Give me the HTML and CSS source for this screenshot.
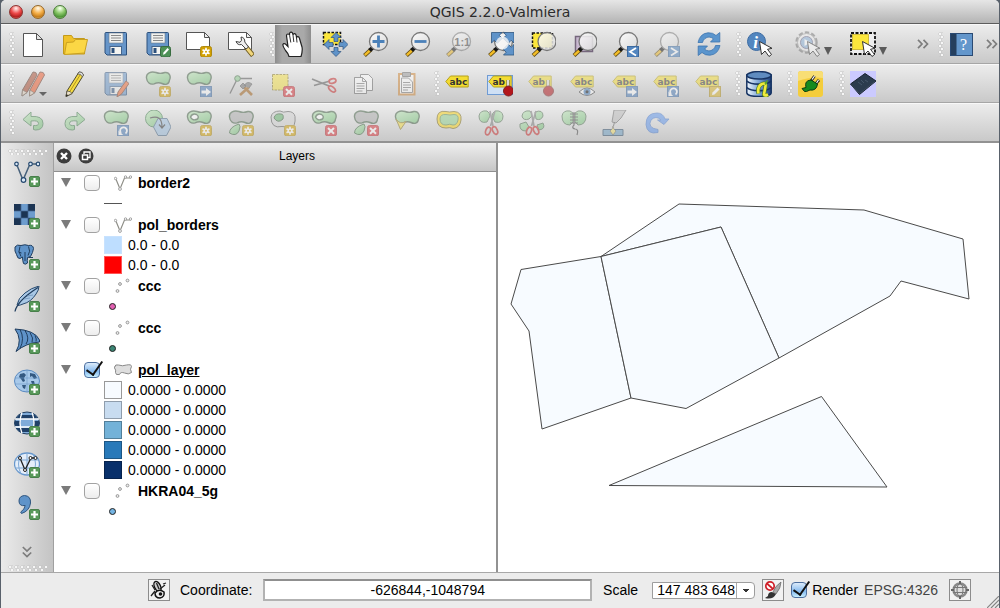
FILE: index.html
```
<!DOCTYPE html>
<html lang="en">
<head>
<meta charset="utf-8">
<title>QGIS 2.2.0-Valmiera</title>
<link rel="stylesheet" href="styles.css">
</head>
<body>
<svg class="sprite" aria-hidden="true">
<defs>
<linearGradient id="dbg" x1="0" y1="0" x2="1" y2="0"><stop offset="0" stop-color="#f2f8fd"/><stop offset=".5" stop-color="#7ba5d6"/><stop offset="1" stop-color="#1d3f78"/></linearGradient>
<linearGradient id="lens" x1="0" y1="0" x2="1" y2="1"><stop offset="0" stop-color="#fff"/><stop offset="1" stop-color="#d9d9d9"/></linearGradient>
<linearGradient id="green" x1="0" y1="0" x2="1" y2="1"><stop offset="0" stop-color="#b9e4b3"/><stop offset="1" stop-color="#6fbf73"/></linearGradient>

<path id="blob" d="M1.500 7C1 2 6 0 11 1.500C15 3.200 17 2.500 20 1.500C25 1 26 6 24.500 9C24 14 20 14 17 12.500C14 11 12 11.500 9 12.800C5 14 2 11.500 1.500 7Z" stroke="#3f5b40" stroke-width="1.400"/>
<g id="b-sun"><rect x="14.500" y="15.500" width="11" height="10.500" rx="2" fill="#d2a000" stroke="#b08a10"/><path d="M20 16.800v8M16.500 18.800l7 4M23.500 18.800l-7 4" stroke="#fff" stroke-width="1.600"/><circle cx="20" cy="20.800" r="2.500" fill="#fff"/><circle cx="20" cy="20.800" r="1" fill="#d2a000"/></g>
<g id="b-x"><rect x="14.500" y="15.500" width="11" height="10.500" rx="2" fill="#d9343b" stroke="#b92a30"/><path d="M17 18l6 5.700M23 18l-6 5.700" stroke="#fff" stroke-width="2"/></g>
<g id="b-plus"><rect x="15.500" y="15.500" width="10" height="10" rx="1.500" fill="#58995a" stroke="#487f4b"/><path d="M20.500 17v7M17 20.500h7" stroke="#fff" stroke-width="2.200"/></g>
<g id="b-arrow"><rect x="14.500" y="15.500" width="11" height="10.500" fill="#4d7db8" stroke="#3c669b"/><path d="M15.500 19.500h4.500v-2.500l5 4-5 4v-2.500h-4.500z" fill="#fff"/></g>
<g id="b-turn"><rect x="14.500" y="15.500" width="11" height="10.500" fill="#4d7db8" stroke="#3c669b"/><path d="M22.500 23.500a3.400 3.400 0 1 0-4.500-.5" fill="none" stroke="#fff" stroke-width="1.800"/><path d="M15.500 20.500v4.500h4.700z" fill="#fff"/></g>
<g id="floppy"><path d="M2 2.500q0-1 1-1h19.500q1 0 1 1v21.500H4l-2-2z" fill="#6695c9" stroke="#2c507c"/><rect x="6" y="2" width="14" height="10" fill="#f1f1ee" stroke="#6d7c8c" stroke-width=".6"/><path d="M8 4.500h10M8 7h10M8 9.500h10" stroke="#888"/><rect x="7" y="15.500" width="11.500" height="8" fill="#f4f4f1" stroke="#46658b"/><rect x="8.500" y="17" width="3" height="5" fill="#2c507c"/></g>
<g id="pencil"><path d="M4 20L16 1q3.500-.5 4.500 3L9 22.500l-6 3z" fill="#f5dc42" stroke="#4c4830"/><path d="M6.500 21L18 2.500" stroke="#b1941d"/><path d="M4 20l-1 5.500 6-3q-1-2.500-5-2.500z" fill="#e8dfc9" stroke="#55503c" stroke-width=".8"/><path d="M3.400 23.200L3 25.500l2.500-1.200z" fill="#222"/><path d="M16 1q3.500-.5 4.500 3l-1.200 1.900q-1-3-4.500-3z" fill="#ddd" stroke="#555" stroke-width=".7"/></g>
<g id="mag"><path d="M1.500 24.500L8 18.500" stroke="#5d4916" stroke-width="4"/><path d="M1.800 24.200L7.500 19" stroke="#f3bd27" stroke-width="2.400"/><path d="M6.500 19.500L10 16.500" stroke="#181818" stroke-width="4"/><circle cx="15.500" cy="10.500" r="9" fill="url(#lens)" fill-opacity=".85" stroke="#777" stroke-width="1.300"/></g>
<path id="cursor" d="M12.500 10.500l2 13 3.500-3.500 4 5.500 2.500-2-4-5.200 4.500-1z" fill="#fff" stroke="#333"/>
<g id="tag"><path d="M.8 10.500L5.500 5h17.700v11H5.500z" fill="#f3dc32" stroke="#b6a11d"/><text x="4.500" y="14" class="tag-text">abc</text></g>
<g id="tag2"><path d="M.8 10.500L5.500 5h17.700v11H5.500z" fill="#f3dc32" stroke="#b6a11d"/><text x="4.500" y="14" class="tag-text">ab</text><path d="M20 9v9" stroke="#555" stroke-width="3"/><path d="M20 9v9" stroke="#fff" stroke-width="1.600"/><circle cx="20.500" cy="20" r="5" fill="#b3161c" stroke="#7e2324"/></g>
<path id="corner" d="M0 0h10.500L7.800 2.800l3 3-5 5-3-3L0 10.500z" fill="#5f93c9" stroke="#2f557f" stroke-width=".8"/>
<g id="scissors"><path d="M12 1l3 15M17 1l-4.500 15" stroke="#777" stroke-width="1.600" fill="none"/><g fill="none" stroke="#c62828" stroke-width="1.700"><ellipse cx="10" cy="21" rx="2.300" ry="4" transform="rotate(20 10 21)"/><ellipse cx="17" cy="20.500" rx="2.300" ry="4" transform="rotate(-25 17 20.500)"/></g></g>

<symbol id="i-new" viewBox="0 0 26 26"><path d="M3.500 2.500h13l6 6v17h-19z" fill="#fff" stroke="#555"/><path d="M16.500 2.500v6h6z" fill="#e4e4e4" stroke="#555"/></symbol>
<symbol id="i-open" viewBox="0 0 26 26"><path d="M1.500 23V4.500h8l2 3h11V23z" fill="#f0c22b" stroke="#c39a1a"/><path d="M4.500 11.500l7-.5 2-2.500h12L22.500 22l-20 1.500z" fill="#fbd745" stroke="#c9a021"/></symbol>
<symbol id="i-save" viewBox="0 0 26 26"><use href="#floppy"/></symbol>
<symbol id="i-saveas" viewBox="0 0 26 26"><use href="#floppy"/><rect x="15.500" y="15.500" width="10" height="10.500" rx="2" fill="#4e9157" stroke="#386c40"/><path d="M18 23.800l.5-2.300 4-4.500 1.500 1.500-4 4.500z" fill="#fff"/></symbol>
<symbol id="i-composer" viewBox="0 0 26 26"><path d="M.5 1.500h18l5 5v12H.5z" fill="#fff" stroke="#555"/><path d="M18.500 1.500v5h5z" fill="#eee" stroke="#555"/><use href="#b-sun"/></symbol>
<symbol id="i-manager" viewBox="0 0 26 26"><path d="M.5 1.500h18l5 5v12H.5z" fill="#fff" stroke="#555"/><path d="M18.500 1.500v5h5z" fill="#eee" stroke="#555"/><path d="M18 16l7 8.500" stroke="#6d5a20" stroke-width="5"/><path d="M18 16l6.500 8" stroke="#f1d67c" stroke-width="3"/><path d="M13 6q4 .5 3.800 5l3.700 5-2.500 2-4.500-4.500q-4 1-5.500-3l4 .8 1.500-2z" fill="#eee" stroke="#444"/></symbol>
<symbol id="i-hand" viewBox="0 0 26 26"><path d="M9 25.500Q8 22 5.500 19.500Q3 16 2.800 13.800Q3.500 12 5.500 13L8 15.500L6.500 4.800Q6.500 3 8 3Q9.300 3 9.600 4.500L9.500 2.500Q10 1 11.300 1.200Q12.600 1.500 12.800 3L13 4Q13.300 2.500 14.600 2.700Q16 3 16.200 4.500L16.500 6.500Q17 5.500 18 5.700Q19.300 6 19.500 7.500L22 16Q22.800 20 21 25.500Z" fill="#fff" stroke="#222" stroke-width="1.200"/><path d="M9.600 4.500l1.200 7M13 4l.8 7M16.500 6.500l.5 5" stroke="#333" fill="none"/></symbol>
<symbol id="i-pansel" viewBox="0 0 26 26"><rect x="1.500" y="1.500" width="17" height="12" fill="#fbe63c" stroke="#111" stroke-width="1.500" stroke-dasharray="2.500 1.500"/><g fill="#5f93c9" stroke="#2f557f" stroke-width=".7"><path id="up" d="M14 1.500l5 5h-3v4h-4v-4H9z"/><use href="#up" transform="rotate(90 14 13.500)"/><use href="#up" transform="rotate(180 14 13.500)"/><use href="#up" transform="rotate(270 14 13.500)"/></g></symbol>
<symbol id="i-zoomin" viewBox="0 0 26 26"><use href="#mag"/><path d="M15.500 4.500v12M9.500 10.500h12" stroke="#4b81b9" stroke-width="2.800"/></symbol>
<symbol id="i-zoomout" viewBox="0 0 26 26"><use href="#mag"/><path d="M9.500 10.500h12" stroke="#4b81b9" stroke-width="2.800"/></symbol>
<symbol id="i-zoom1" viewBox="0 0 26 26"><use href="#mag"/><text x="8.300" y="14.500" class="one-text">1:1</text></symbol>
<symbol id="i-zoomfull" viewBox="0 0 26 26"><use href="#mag"/><use href="#corner" transform="translate(3.500 1.500)"/><use href="#corner" transform="translate(26 1.500) scale(-1 1)"/><use href="#corner" transform="translate(26 24) scale(-1)"/><circle cx="14.500" cy="12" r="6.500" fill="#f8f8f8" fill-opacity=".8"/></symbol>
<symbol id="i-zoomsel" viewBox="0 0 26 26"><rect x="2.500" y="2" width="20" height="15" fill="#fbe63c" stroke="#111" stroke-width="1.500" stroke-dasharray="2.500 1.500"/><use href="#mag" x="1.500"/></symbol>
<symbol id="i-zoomlayer" viewBox="0 0 26 26"><path d="M4.500 5.500h17v15h-17z" fill="#c9b8d0" stroke="#76677d" stroke-width="1.500"/><use href="#mag" x="1.500"/></symbol>
<symbol id="i-zoomlast" viewBox="0 0 26 26"><use href="#mag"/><rect x="14.500" y="15.500" width="11" height="10.500" fill="#5386bf" stroke="#3c6aa0"/><path d="M23 17l-6 3.800 6 3.800" fill="none" stroke="#fff" stroke-width="1.800"/></symbol>
<symbol id="i-zoomnext" viewBox="0 0 26 26"><use href="#mag"/><rect x="14.500" y="15.500" width="11" height="10.500" fill="#5386bf" stroke="#3c6aa0"/><path d="M17 17l6 3.800-6 3.800" fill="none" stroke="#fff" stroke-width="1.800"/></symbol>
<symbol id="i-refresh" viewBox="0 0 26 26"><path id="half" d="M2 11.500Q4 2.500 12 1.800Q17 1.500 20 4.500L23.800 1.500V11H14.500l3-3.200Q13 4.500 9 7.500Q7 9 6.500 11.500Z" fill="#5b95cd" stroke="#3b74ae" stroke-width=".8"/><use href="#half" transform="rotate(180 13 13)"/></symbol>
<symbol id="i-identify" viewBox="0 0 26 26"><circle cx="9.500" cy="10.500" r="9" fill="#5386bf" stroke="#3d6ca3"/><text x="6.200" y="16.500" class="info-text">i</text><use href="#cursor"/></symbol>
<symbol id="i-gear" viewBox="0 0 26 26"><circle cx="11.500" cy="11.500" r="9.300" fill="none" stroke="#777" stroke-width="3.800" stroke-dasharray="4 2"/><circle cx="11.500" cy="11.500" r="9" fill="#ededed" stroke="#999"/><circle cx="11.500" cy="11.500" r="6" fill="#8ab1d8" stroke="#668"/><path d="M9.500 8l6 3.500-6 3.500z" fill="#fff"/><use href="#cursor"/></symbol>
<symbol id="i-select" viewBox="0 0 26 26"><rect x="1" y="2" width="24" height="21" fill="#eee" stroke="#111" stroke-width="1.800" stroke-dasharray="3 1.500"/><rect x="2.500" y="3.500" width="16" height="15" fill="#fbe63c" stroke="#c7b12c" stroke-width=".8"/><use href="#cursor"/></symbol>
<symbol id="i-help" viewBox="0 0 26 26"><rect x="1.500" y="2.500" width="22" height="22" fill="#6396cb" stroke="#2a4a73"/><rect x="2" y="3" width="5.500" height="21" fill="#253f5e"/><text x="11" y="19" class="help-text">?</text></symbol>

<symbol id="i-pencils" viewBox="0 0 26 26"><path d="M2.500 19L13 1q3.500-.5 4 3L7 21.500l-5 3.500z" fill="#a84a2f" stroke="#5a3324"/><path d="M10 19L20 1q4-.5 4.500 3L14.500 22l-5 3z" fill="#ee5a2c" stroke="#6b3727"/><path d="M10 19l-.5 6 5-3zM2.500 19L2 25l5-3.500z" fill="#e5d5c2" stroke="#5a4a3a" stroke-width=".7"/></symbol>
<symbol id="i-pencil" viewBox="0 0 26 26"><use href="#pencil" x="1"/></symbol>
<symbol id="i-saveedit" viewBox="0 0 26 26"><use href="#floppy"/><path d="M15 21l8-11 3 2.500L18.500 23l-4.500 3z" fill="#f06a35" stroke="#7c4029"/></symbol>
<symbol id="i-addfeat" viewBox="0 0 26 26"><use href="#blob" fill="url(#green)"/><use href="#b-sun"/></symbol>
<symbol id="i-movefeat" viewBox="0 0 26 26"><use href="#blob" fill="url(#green)"/><use href="#b-arrow"/></symbol>
<symbol id="i-node" viewBox="0 0 26 26"><path d="M2 22.500L9.500 7.500H24" fill="none" stroke="#555" stroke-width="1.300"/><circle cx="9.500" cy="7.500" r="2.800" fill="#8bc98d" stroke="#3f6641"/><path d="M12 24l9-8M14 14l10 10" stroke="#a3631c" stroke-width="2.600"/><path d="M16 15q3-6 8-2l-3 4M12 15l3-3 3 3-3 3z" fill="#777" stroke="#444" stroke-width=".7"/></symbol>
<symbol id="i-delsel" viewBox="0 0 26 26"><rect x="3.500" y="3.500" width="15.500" height="15.500" fill="#f7e24a" stroke="#8a7b22" stroke-dasharray="2.500 1"/><use href="#b-x"/></symbol>
<symbol id="i-cut" viewBox="0 0 26 26"><path d="M1 8l17 7M3 14.500L19 10" stroke="#555" stroke-width="1.700"/><g fill="none" stroke="#c62828" stroke-width="1.700"><ellipse cx="21.500" cy="10" rx="3.500" ry="2.200" transform="rotate(-15 21.500 10)"/><ellipse cx="21" cy="18" rx="4" ry="2.200" transform="rotate(40 21 18)"/></g></symbol>
<symbol id="i-copy" viewBox="0 0 26 26"><path id="sheet" d="M2.500 6.500h8l4 4v12h-12z" fill="#fff" stroke="#666"/><use href="#sheet" x="6" y="-3"/><path d="M2.500 6.500h8l4 4v12h-12z" fill="#fff" stroke="#666"/><path d="M4.500 12.500h8M4.500 15h8M4.500 17.500h8M4.500 20h6M10.500 6.500v4h4" fill="none" stroke="#777"/></symbol>
<symbol id="i-paste" viewBox="0 0 26 26"><rect x="5" y="3" width="15.500" height="20.500" fill="#fff" stroke="#ce8637" stroke-width="2"/><path d="M8.500 1.500h8v4h-8z" fill="#999" stroke="#666"/><path d="M7.500 7h7l4 4v10.500h-11z" fill="#fff" stroke="#777"/><path d="M9 11.500h7M9 14h8M9 16.500h8M9 19h5" stroke="#777"/></symbol>
<symbol id="i-label" viewBox="0 0 26 26"><use href="#tag"/></symbol>
<symbol id="i-labelpin" viewBox="0 0 26 26"><rect x=".5" y="4.500" width="25" height="19" fill="#cfe0f5" stroke="#6f9bd4"/><use href="#tag2" x="1"/></symbol>
<symbol id="i-labelpin2" viewBox="0 0 26 26"><use href="#tag2"/></symbol>
<symbol id="i-labelshow" viewBox="0 0 26 26"><use href="#tag"/><path d="M9 21q8-8 16 0q-8 7-16 0z" fill="#fff" stroke="#444"/><circle cx="17" cy="20.800" r="3.500" fill="#4d82bd"/><circle cx="17" cy="20.800" r="1.500" fill="#111"/></symbol>
<symbol id="i-labelmove" viewBox="0 0 26 26"><use href="#tag"/><use href="#b-arrow"/></symbol>
<symbol id="i-labelrot" viewBox="0 0 26 26"><use href="#tag"/><use href="#b-turn"/></symbol>
<symbol id="i-labeledit" viewBox="0 0 26 26"><use href="#tag"/><rect x="14.500" y="15.500" width="11" height="10.500" fill="#d9b52c" stroke="#ad8d1a"/><path d="M17 24l.5-2.500 5-5 2 2-5 5z" fill="#fff"/></symbol>
<symbol id="i-db" viewBox="0 0 26 26"><path d="M.8 4v18q1 3.500 12.200 3.500T25.200 22V4z" fill="url(#dbg)" stroke="#173463" stroke-width="1.500"/><ellipse cx="13" cy="4.300" rx="12.200" ry="3.700" fill="#5f8cc0" stroke="#173463" stroke-width="1.500"/><path d="M.8 10q3 3.200 12.200 3.200T25.200 10M.8 16.500q3 3.200 12.200 3.200t12.200-3.200" fill="none" stroke="#173463" stroke-width="1.800"/><path d="M12.500 22.500q-1.500-7 3.500-9.500 4-1.500 3.500 2l-1.500 8.500q.5 2 4 0" fill="none" stroke="#4c7d1e" stroke-width="4"/><path d="M12.500 22.500q-1.500-7 3.500-9.500 4-1.500 3.500 2l-1.500 8.500q.5 2 4 0" fill="none" stroke="#f0ea3c" stroke-width="2.600"/><path d="M18.500 13q1-3.500 3.500-4-.5 3-2.500 5z" fill="#57a32c"/></symbol>
<symbol id="i-plug" viewBox="0 0 26 26"><rect x="0" y="0" width="25" height="26" rx="3" fill="#f4cd3c"/><path d="M0 10V3q0-3 3-3h19q3 0 3 3v4q-12-2-25 3z" fill="#f8de75"/><path d="M13 10l3.500-5M17.500 13l3.500-4" stroke="#222" stroke-width="2.800"/><path d="M14 8.500L16.500 5M18.500 12l2-3" stroke="#fff" stroke-width="1.200"/><path d="M4 17.500l4-1q-2-7 5-7.500l6.500 4q-1 7-7.500 6l-3.500 1.500-2 0z" fill="#168a1e" stroke="#0d3e12"/></symbol>
<symbol id="i-chip" viewBox="0 0 26 26"><rect width="26" height="26" fill="#cbcaff"/><path d="M.5 13L15 2.500 26 10 9.500 23.500z" fill="#2b3b4e" stroke="#18222f"/><path d="M8 11l4 3M11 9l3 3M15 9l3 2" stroke="#45566a"/><path d="M1 13.500l8.500 9L25.500 10" fill="none" stroke="#3c4c5e"/></symbol>

<symbol id="i-undo" viewBox="0 0 26 26"><path d="M3 9.500L11 2v4.500q12-1 12 7Q23 20 15.500 20l-2-.5v-4q5 .5 5-2 0-3.500-7.500-2.500v5z" fill="url(#green)" stroke="#3f7a4a"/></symbol>
<symbol id="i-redo" viewBox="0 0 26 26"><path d="M23 9.500L15 2v4.500q-12-1-12 7Q3 20 10.500 20l2-.5v-4q-5 .5-5-2 0-3.500 7.500-2.500v5z" fill="url(#green)" stroke="#3f7a4a"/></symbol>
<symbol id="i-rotfeat" viewBox="0 0 26 26"><use href="#blob" fill="url(#green)"/><use href="#b-turn"/></symbol>
<symbol id="i-simplify" viewBox="0 0 26 26"><circle cx="9" cy="8.500" r="8.500" fill="url(#green)" stroke="#3f7a4a"/><path d="M8.500 17l4.500-8.500h9L26 17l-4.500 8.500H13z" fill="#9fc1e0" stroke="#496785"/><path d="M5 8q12-4 12 9M14 14.500l3 3.500 3-3.500" fill="none" stroke="#333" stroke-width="1.200"/></symbol>
<symbol id="i-addring" viewBox="0 0 26 26"><use href="#blob" fill="url(#green)"/><path d="M4.500 7q2-4 6-2.500 3 2 1 4.500-5 2.500-7-2z" fill="#fff" stroke="#3f5b40" stroke-width="1.400"/><use href="#b-sun"/></symbol>
<symbol id="i-addpart" viewBox="0 0 26 26"><use href="#blob" fill="#aaa"/><path d="M1.500 23q0-6 9.500-9 2 2 0 7-3 6-9.500 2z" fill="url(#green)" stroke="#3f6641"/><use href="#b-sun"/></symbol>
<symbol id="i-fillring" viewBox="0 0 26 26"><path d="M1 7Q2 1 10 1q3 2 8 .5 6 0 7 5 1 10-5 12.500-4-3-8-2.500Q1 19 1 7z" fill="#d2d2d2" stroke="#555"/><path d="M4 8q1-5 7-4 3 0 2 5-5 5-9-1z" fill="#5fae66" stroke="#2f5631"/><use href="#b-sun"/></symbol>
<symbol id="i-delring" viewBox="0 0 26 26"><use href="#blob" fill="url(#green)"/><path d="M4.500 7q2-4 6-2.500 3 2 1 4.500-5 2.500-7-2z" fill="#fff" stroke="#3f5b40" stroke-width="1.400"/><use href="#b-x"/></symbol>
<symbol id="i-delpart" viewBox="0 0 26 26"><use href="#blob" fill="#aaa"/><path d="M1.500 23q0-6 9.500-9 2 2 0 7-3 6-9.500 2z" fill="url(#green)" stroke="#3f6641"/><use href="#b-x"/></symbol>
<symbol id="i-reshape" viewBox="0 0 26 26"><use href="#blob" fill="url(#green)"/><path d="M2 9q4 6 10 2.500L6.500 19.500z" fill="#f5dc42" stroke="#8b7a22"/></symbol>
<symbol id="i-offset" viewBox="0 0 26 26"><path d="M1 9Q1 0 10 1.500q3 1 8 0Q26 2 25 10q-1 8-8 8.500-3-1.500-7-.5Q1 18 1 9z" fill="#f9d413" stroke="#7a6816"/><path d="M4 9q0-5 6-4.500 4 1 8 0 5 0 4 5.500-1 5-5 5-3-1.500-7 0-6 0-6-6z" fill="#8fd08d" stroke="#5a8a4c"/></symbol>
<symbol id="i-split" viewBox="0 0 26 26"><path id="lobe" d="M1 6q1-6 8-5 3 2 3 5l-3 6q-8 2-8-6z" fill="url(#green)" stroke="#4e6b4f"/><use href="#lobe" transform="translate(26) scale(-1 1)"/><use href="#scissors"/></symbol>
<symbol id="i-splitparts" viewBox="0 0 26 26"><path d="M3 6q1-6 8-5 2 2 2 5l-3 3q-6 2-7-3zM16 2q8-3 8 4-2 5-7 3zM1 14l6-2 3 5-3 4q-7 0-6-7zM18 15l6-2q3 6-4 7z" fill="url(#green)" stroke="#4e6b4f"/><use href="#scissors"/></symbol>
<symbol id="i-merge" viewBox="0 0 26 26"><path d="M1 6q1-6 8-5l3 2v9l-3 3Q1 15 1 6zM25 6q-1-6-8-5l-3 2v9l3 3q8 0 8-9z" fill="url(#green)" stroke="#4e6b4f"/><path d="M9 4h8M9 7h8M9 10h8M9 13h8M13 2v13q-3 3 1 4 4 0 2 6" fill="none" stroke="#444" stroke-width="1.200"/></symbol>
<symbol id="i-mergeattr" viewBox="0 0 26 26"><path d="M12 0h12l-5 8-5 5-4-1z" fill="#bbb" stroke="#666"/><path d="M12.500 12l-1 4" stroke="#555"/><path d="M1 19.500h20V25.500H1z" fill="#6ea0c4" stroke="#2e4d68"/><path d="M8 21q3-2 3-5 0 3 3 5l-3 4z" fill="#f1df6b" stroke="#555" stroke-width=".7"/></symbol>
<symbol id="i-rotsym" viewBox="0 0 26 26"><path d="M14 22.500Q3 25 2 14.500 2 3 13 3q6 0 8 6h4l-5 5.500L13.500 10h3.500q-5-5-10 0-4 8 7 9.500z" fill="#5c93ea" stroke="#3b6fc6" stroke-width=".8"/></symbol>

<symbol id="s-vector" viewBox="0 0 26 26"><path d="M2.500 3L9 19 16 3h7" fill="none" stroke="#46607a" stroke-width="1.500"/><g fill="#d8e6f4" stroke="#284b71" stroke-width="1.200"><circle cx="2.500" cy="3" r="1.800"/><circle cx="16.500" cy="3" r="1.800"/><circle cx="24" cy="3" r="1.800"/><circle cx="9.500" cy="19" r="2.300"/></g><use href="#b-plus"/></symbol>
<symbol id="s-raster" viewBox="0 0 26 26"><rect y="1" width="21" height="21" fill="#6d9ccd"/><path d="M0 1h7v7H0zM14 1h7v7h-7zM7 8h7v7H7zM0 15h7v7H0zM14 15h7v7h-7z" fill="#1b3453"/><path d="M7 1v21M14 1v21M0 8h21M0 15h21" stroke="#43668f" stroke-width=".7"/><use href="#b-plus"/></symbol>
<symbol id="s-pg" viewBox="0 0 26 26"><path d="M1 3Q3 0 7 1.500 11 0 14.500 1.500 19 .5 19.500 4.500q-.5 4-3 8l-3 1q-.5 3 0 5.500-2 2-4 .5-1-3-1-6.500l-2.500 1.500Q3.500 15 2.500 10.500L1 7z" fill="#5f93c9" stroke="#203d5e"/><path d="M6 2.500q-2.500 5 1 10M14.500 2.500q2.500 5-.5 9M11 8v9M4.500 8l3 1" fill="none" stroke="#203d5e"/><path d="M14.500 13.500h4.500" stroke="#203d5e"/><use href="#b-plus"/></symbol>
<symbol id="s-feather" viewBox="0 0 26 26"><path d="M3 19Q4 12 11 7 17 2 25 0q0 4-3 8-5 8-13 10-2 1-5 1.500z" fill="#a9c8e6" stroke="#28496d"/><path d="M1 25.500Q3 15 24 1.500" fill="none" stroke="#203d5e" stroke-width="1.300"/><path d="M10 13l6-1M13 10l6-1" stroke="#6f93b8" stroke-width=".8"/><use href="#b-plus"/></symbol>
<symbol id="s-sail" viewBox="0 0 26 26"><path d="M1 1q20 1 24.500 11v2Q12 15 2 23.500 9 12 1 1z" fill="#5f93c9" stroke="#203d5e"/><path d="M6 1.500q5 9 0 19M11 2.500q5 8 1 13.500M16 4.500q4 6 2 10M21 7.500q2 4 1 6" fill="none" stroke="#203d5e"/><use href="#b-plus"/></symbol>
<symbol id="s-wms" viewBox="0 0 26 26"><ellipse cx="13" cy="12" rx="12.500" ry="11" fill="#a8c9ea" stroke="#5b8ac0"/><path d="M6 5l4-1 2 2-2 3 1 3-2 1-2-3-2-2zM8 16l4 0-1 4-2-1zM16 4l5 1 2 4-3 1-2-3-2 1zM17 12l3 0 1 4-2 2z" fill="#345981"/><path d="M1 9h24M1 15h24M13 1v22" stroke="#6d98c8" stroke-width=".6"/><use href="#b-plus"/></symbol>
<symbol id="s-wcs" viewBox="0 0 26 26"><ellipse cx="13" cy="12" rx="12.500" ry="11" fill="#7fabd9" stroke="#203d5e"/><path d="M5 4h16l3 4H2zM1 10h5v5H1zM20 10h5v5h-5zM2 17h22l-4 4H6z" fill="#1f4068"/><path d="M1 8h24M1 16h24M8 1.500q-4 10 0 21M18 1.500q4 10 0 21" fill="none" stroke="#fff" stroke-width="1.300"/><use href="#b-plus"/></symbol>
<symbol id="s-wfs" viewBox="0 0 26 26"><ellipse cx="13" cy="12" rx="12.500" ry="11" fill="#e4eefa" stroke="#6797cc" stroke-width="1.300"/><path d="M1 8h24M1 16h24M13 1v22M7 2q-5 10 0 20M19 2q5 10 0 20" fill="none" stroke="#7fa9d6"/><path d="M6 6l5 12 6-12h4" fill="none" stroke="#222" stroke-width="1.300"/><g fill="#fff" stroke="#222"><circle cx="6" cy="6" r="1.500"/><circle cx="11" cy="18" r="1.500"/><circle cx="16.500" cy="6" r="1.500"/><circle cx="21.500" cy="6" r="1.500"/></g><use href="#b-plus"/></symbol>
<symbol id="s-comma" viewBox="0 0 26 26"><path d="M5 7q0-5 5.500-5.500 6.500.5 6 7.500-1 8-9 10.500l-.8-1.500q4-2.500 4.500-6.500Q5 12.500 5 7z" fill="#5f93c9" stroke="#2f557f"/><use href="#b-plus"/></symbol>

<symbol id="t-line" viewBox="0 0 18 16"><path d="M1.500 3L6 14l4.500-11H17" fill="none" stroke="#8f8f88" stroke-width="1.200"/><g fill="#fff" stroke="#999" stroke-width=".9"><circle cx="1.500" cy="3.500" r="1.200"/><circle cx="6" cy="14" r="1.400"/><circle cx="11.500" cy="2" r="1.200"/><circle cx="16.500" cy="2" r="1.200"/></g></symbol>
<symbol id="t-point" viewBox="0 0 18 16"><g fill="#eee" stroke="#999"><circle cx="13.500" cy="2.500" r="1.400"/><circle cx="6" cy="6" r="1.400"/><circle cx="3.500" cy="13" r="1.400"/></g></symbol>
<symbol id="t-poly" viewBox="0 0 18 16"><path d="M.8 5Q1 2 4.500 3q4 1.500 8 0 5-1 5 1.500-2 2.500 0 6-3 2.500-7 .5-4-1.500-5 1.500-4 1-4-2 1-2-1.500-5.500z" fill="#dedede" stroke="#888"/></symbol>
<symbol id="i-more" viewBox="0 0 12 10"><path d="M1 .8l4 4.200-4 4.200M6.500.8l4 4.200-4 4.200" fill="none" stroke="#7d7d7d" stroke-width="1.700"/></symbol>
</defs>
</svg>

<div class="window">
<header class="titlebar">
<div class="lights"><button class="light red" aria-label="Close"></button><button class="light amber" aria-label="Minimize"></button><button class="light lime" aria-label="Zoom"></button></div>
<h1 class="title">QGIS 2.2.0-Valmiera</h1>
</header>

<div class="toolbar" role="toolbar" aria-label="File and navigation">
<span class="grip"></span>
<div class="group six">
<button class="tool" aria-label="New"><svg><use href="#i-new"/></svg></button>
<button class="tool" aria-label="Open"><svg><use href="#i-open"/></svg></button>
<button class="tool" aria-label="Save"><svg><use href="#i-save"/></svg></button>
<button class="tool" aria-label="Save as"><svg><use href="#i-saveas"/></svg></button>
<button class="tool" aria-label="New composer"><svg><use href="#i-composer"/></svg></button>
<button class="tool" aria-label="Composer manager"><svg><use href="#i-manager"/></svg></button>
</div>
<span class="grip"></span>
<div class="group eleven">
<button class="tool pressed" aria-label="Pan"><svg><use href="#i-hand"/></svg></button>
<button class="tool" aria-label="Pan to selection"><svg><use href="#i-pansel"/></svg></button>
<button class="tool" aria-label="Zoom in"><svg><use href="#i-zoomin"/></svg></button>
<button class="tool" aria-label="Zoom out"><svg><use href="#i-zoomout"/></svg></button>
<button class="tool dim" aria-label="Zoom native"><svg><use href="#i-zoom1"/></svg></button>
<button class="tool" aria-label="Zoom full"><svg><use href="#i-zoomfull"/></svg></button>
<button class="tool" aria-label="Zoom to selection"><svg><use href="#i-zoomsel"/></svg></button>
<button class="tool" aria-label="Zoom to layer"><svg><use href="#i-zoomlayer"/></svg></button>
<button class="tool" aria-label="Zoom last"><svg><use href="#i-zoomlast"/></svg></button>
<button class="tool dim" aria-label="Zoom next"><svg><use href="#i-zoomnext"/></svg></button>
<button class="tool" aria-label="Refresh"><svg><use href="#i-refresh"/></svg></button>
</div>
<span class="grip"></span>
<div class="group select-group">
<button class="tool" aria-label="Identify"><svg><use href="#i-identify"/></svg></button>
<button class="tool menu" aria-label="Run action"><svg class="dim"><use href="#i-gear"/></svg><span class="drop"></span></button>
<button class="tool menu" aria-label="Select features"><svg><use href="#i-select"/></svg><span class="drop"></span></button>
<button class="more" aria-label="More tools"><svg><use href="#i-more"/></svg></button>
</div>
<span class="grip"></span>
<div class="group help-group">
<button class="tool" aria-label="Help"><svg><use href="#i-help"/></svg></button>
<button class="more" aria-label="More help"><svg><use href="#i-more"/></svg></button>
</div>
</div>

<div class="toolbar" role="toolbar" aria-label="Editing and labels">
<span class="grip"></span>
<div class="group ten">
<button class="tool dim" aria-label="Current edits"><svg><use href="#i-pencils"/></svg><span class="drop small"></span></button>
<button class="tool" aria-label="Toggle editing"><svg><use href="#i-pencil"/></svg></button>
<button class="tool dim" aria-label="Save edits"><svg><use href="#i-saveedit"/></svg></button>
<button class="tool dim" aria-label="Add feature"><svg><use href="#i-addfeat"/></svg></button>
<button class="tool dim" aria-label="Move feature"><svg><use href="#i-movefeat"/></svg></button>
<button class="tool dim" aria-label="Node tool"><svg><use href="#i-node"/></svg></button>
<button class="tool dim" aria-label="Delete selected"><svg><use href="#i-delsel"/></svg></button>
<button class="tool dim" aria-label="Cut"><svg><use href="#i-cut"/></svg></button>
<button class="tool dim" aria-label="Copy"><svg><use href="#i-copy"/></svg></button>
<button class="tool dim" aria-label="Paste"><svg><use href="#i-paste"/></svg></button>
</div>
<span class="grip"></span>
<div class="group seven">
<button class="tool" aria-label="Labeling"><svg><use href="#i-label"/></svg></button>
<button class="tool" aria-label="Highlight pinned labels"><svg><use href="#i-labelpin"/></svg></button>
<button class="tool dim" aria-label="Pin labels"><svg><use href="#i-labelpin2"/></svg></button>
<button class="tool dim" aria-label="Show labels"><svg><use href="#i-labelshow"/></svg></button>
<button class="tool dim" aria-label="Move label"><svg><use href="#i-labelmove"/></svg></button>
<button class="tool dim" aria-label="Rotate label"><svg><use href="#i-labelrot"/></svg></button>
<button class="tool dim" aria-label="Change label"><svg><use href="#i-labeledit"/></svg></button>
</div>
<span class="grip"></span>
<div class="group"><button class="tool" aria-label="DB manager"><svg><use href="#i-db"/></svg></button></div>
<span class="grip"></span>
<div class="group"><button class="tool" aria-label="Plugin"><svg><use href="#i-plug"/></svg></button></div>
<span class="grip"></span>
<div class="group"><button class="tool" aria-label="Processing"><svg><use href="#i-chip"/></svg></button></div>
</div>

<div class="toolbar last" role="toolbar" aria-label="Advanced editing">
<span class="grip"></span>
<div class="group sixteen">
<button class="tool dim" aria-label="Undo"><svg><use href="#i-undo"/></svg></button>
<button class="tool dim" aria-label="Redo"><svg><use href="#i-redo"/></svg></button>
<button class="tool dim" aria-label="Rotate feature"><svg><use href="#i-rotfeat"/></svg></button>
<button class="tool dim" aria-label="Simplify"><svg><use href="#i-simplify"/></svg></button>
<button class="tool dim" aria-label="Add ring"><svg><use href="#i-addring"/></svg></button>
<button class="tool dim" aria-label="Add part"><svg><use href="#i-addpart"/></svg></button>
<button class="tool dim" aria-label="Fill ring"><svg><use href="#i-fillring"/></svg></button>
<button class="tool dim" aria-label="Delete ring"><svg><use href="#i-delring"/></svg></button>
<button class="tool dim" aria-label="Delete part"><svg><use href="#i-delpart"/></svg></button>
<button class="tool dim" aria-label="Reshape"><svg><use href="#i-reshape"/></svg></button>
<button class="tool dim" aria-label="Offset curve"><svg><use href="#i-offset"/></svg></button>
<button class="tool dim" aria-label="Split features"><svg><use href="#i-split"/></svg></button>
<button class="tool dim" aria-label="Split parts"><svg><use href="#i-splitparts"/></svg></button>
<button class="tool dim" aria-label="Merge features"><svg><use href="#i-merge"/></svg></button>
<button class="tool dim" aria-label="Merge attributes"><svg><use href="#i-mergeattr"/></svg></button>
<button class="tool dim" aria-label="Rotate symbols"><svg><use href="#i-rotsym"/></svg></button>
</div>
</div>

<main class="workspace">
<nav class="sidebar" aria-label="Add layers">
<span class="grip wide"></span>
<div class="side-tools">
<button class="tool" aria-label="Add vector layer"><svg><use href="#s-vector"/></svg></button>
<button class="tool" aria-label="Add raster layer"><svg><use href="#s-raster"/></svg></button>
<button class="tool" aria-label="Add PostGIS layer"><svg><use href="#s-pg"/></svg></button>
<button class="tool" aria-label="Add SpatiaLite layer"><svg><use href="#s-feather"/></svg></button>
<button class="tool" aria-label="Add MSSQL layer"><svg><use href="#s-sail"/></svg></button>
<button class="tool" aria-label="Add WMS layer"><svg><use href="#s-wms"/></svg></button>
<button class="tool" aria-label="Add WCS layer"><svg><use href="#s-wcs"/></svg></button>
<button class="tool" aria-label="Add WFS layer"><svg><use href="#s-wfs"/></svg></button>
<button class="tool" aria-label="Add delimited text layer"><svg><use href="#s-comma"/></svg></button>
</div>
<button class="more down" aria-label="More layers"><svg><use href="#i-more"/></svg></button>
<span class="grip wide"></span>
</nav>

<section class="panel">
<header class="panel-head">
<button class="round" aria-label="Close panel"><svg viewBox="0 0 16 16"><circle cx="8" cy="8" r="7.500" fill="#3d3d3d"/><path d="M5 5l6 6M11 5l-6 6" stroke="#fff" stroke-width="2.400"/></svg></button>
<button class="round" aria-label="Float panel"><svg viewBox="0 0 16 16"><circle cx="8" cy="8" r="7.500" fill="#3d3d3d"/><path d="M6 6V4h6v5.500h-2" fill="none" stroke="#fff" stroke-width="1.300"/><path d="M4.500 7h5v4.500h-5z" fill="#3d3d3d" stroke="#fff" stroke-width="1.500"/></svg></button>
<h2 class="panel-title">Layers</h2>
</header>
<ul class="tree">
<li class="layer"><button class="fold" aria-label="Collapse"></button><input type="checkbox" class="check" id="l1"><svg class="kind"><use href="#t-line"/></svg><label for="l1">border2</label></li>
<li class="mark"><span class="line"></span></li>
<li class="layer"><button class="fold" aria-label="Collapse"></button><input type="checkbox" class="check" id="l2"><svg class="kind"><use href="#t-line"/></svg><label for="l2">pol_borders</label></li>
<li class="range"><span class="swatch pale"></span>0.0 - 0.0</li>
<li class="range"><span class="swatch hot"></span>0.0 - 0.0</li>
<li class="layer"><button class="fold" aria-label="Collapse"></button><input type="checkbox" class="check" id="l3"><svg class="kind"><use href="#t-point"/></svg><label for="l3">ccc</label></li>
<li class="mark"><span class="dot pink"></span></li>
<li class="layer"><button class="fold" aria-label="Collapse"></button><input type="checkbox" class="check" id="l4"><svg class="kind"><use href="#t-point"/></svg><label for="l4">ccc</label></li>
<li class="mark"><span class="dot teal"></span></li>
<li class="layer"><button class="fold" aria-label="Collapse"></button><input type="checkbox" class="check" id="l5" checked><svg class="kind"><use href="#t-poly"/></svg><label for="l5" class="current">pol_layer</label></li>
<li class="range"><span class="swatch c1"></span>0.0000 - 0.0000</li>
<li class="range"><span class="swatch c2"></span>0.0000 - 0.0000</li>
<li class="range"><span class="swatch c3"></span>0.0000 - 0.0000</li>
<li class="range"><span class="swatch c4"></span>0.0000 - 0.0000</li>
<li class="range"><span class="swatch c5"></span>0.0000 - 0.0000</li>
<li class="layer"><button class="fold" aria-label="Collapse"></button><input type="checkbox" class="check" id="l6"><svg class="kind"><use href="#t-point"/></svg><label for="l6">HKRA04_5g</label></li>
<li class="mark"><span class="dot sky"></span></li>
</ul>
</section>

<section class="map" aria-label="Map canvas">
<svg viewBox="498 143 501 429" preserveAspectRatio="xMinYMin meet">
<g fill="#f7fbff" stroke="#4a4a4a" stroke-width="1" stroke-linejoin="round">
<path d="M601 256.500L679 204L864 210L963 239L969 299L901 281L890 296L779 358L721 227Z"/>
<path d="M521 269.500L601 256.500L631 398L542 429L529 331L511 304Z"/>
<path d="M601 256.500L721 227L779 358L686 408.500L631 398Z"/>
<path d="M609 485.500L821.500 396.500L887 487Z"/>
</g>
</svg>
</section>
</main>

<footer class="status">
<button class="square" aria-label="Toggle extents"><svg viewBox="0 0 20 20"><ellipse cx="8.500" cy="6.500" rx="3" ry="5.500" transform="rotate(-25 8.500 6.500)" fill="#ccc" stroke="#111" stroke-width="1.400"/><path d="M3 5l3 5M7.500 3l2.500 6M11 9l5-4M14 4l3-1M2 16l4-5" fill="none" stroke="#222" stroke-width="1.300"/><path d="M6 13q4-5 9-1 1 5-4 6-5 0-5-5z" fill="#eee" stroke="#111" stroke-width="1.500"/><circle cx="11.500" cy="14" r="1.800" fill="#111"/></svg></button>
<label for="coord" class="coord-label">Coordinate:</label>
<input id="coord" class="coord" type="text" value="-626844,-1048794">
<label for="scale" class="scale-label">Scale</label>
<select id="scale" class="scale"><option>147 483 648</option></select>
<button class="square" aria-label="Stop rendering"><svg viewBox="0 0 20 20"><path d="M18 2q-6 4-8 10l3 2q5-6 5-12z" fill="#aaa" stroke="#666" stroke-width=".7"/><path d="M9 12q-4 0-4 4l-3 2q8 2 11-4z" fill="#333"/><circle cx="7" cy="6" r="4.200" fill="#fff" stroke="#cf1f28" stroke-width="1.700"/><path d="M4 3.500l6 5.500" stroke="#cf1f28" stroke-width="1.700"/></svg></button>
<input type="checkbox" id="render" class="check" checked>
<label for="render" class="render-label">Render</label>
<span class="epsg">EPSG:4326</span>
<button class="square" aria-label="Projection"><svg viewBox="0 0 20 20"><circle cx="10" cy="10" r="6.500" fill="#ddd" stroke="#8a8a8a" stroke-width="2.500"/><ellipse cx="10" cy="10" rx="3" ry="6.500" fill="none" stroke="#777"/><path d="M3 7.500h14M3 12.500h14" stroke="#777"/><path d="M10 1v3M10 16v3M1 10h3M16 10h3" stroke="#666" stroke-width="2"/></svg></button>
<svg class="resize" viewBox="0 0 12 12"><path d="M0 12L12 0M4 12l8-8M8 12l4-4" stroke="#858585" stroke-width="1.200"/></svg>
</footer>
</div>
</body>
</html>
```
FILE: styles.css
```
* { box-sizing: border-box; }
html, body { height: 100%; }
body {
  margin: 0;
  background: #59616b;
  font: 14px "Liberation Sans", Arial, sans-serif;
  color: #000;
}
button { appearance: none; border: 0; padding: 0; margin: 0; background: none; font: inherit; }
h1, h2, ul { margin: 0; padding: 0; font-weight: normal; list-style: none; }
svg { display: block; }
.sprite { position: absolute; width: 0; height: 0; }

.window {
  display: flex;
  flex-direction: column;
  min-height: 100vh;
  margin: 0 1px;
  border-radius: 5px 5px 0 0;
  overflow: hidden;
  background: #ececec;
}

.titlebar {
  display: grid;
  grid-template-columns: 1fr auto 1fr;
  align-items: center;
  height: 24px;
  padding: 0 8px;
  background: linear-gradient(#e6e6e6, #b4b4b4);
  border-bottom: 1px solid #5c5c5c;
}
.lights { display: flex; gap: 8px; }
.light { width: 14px; height: 14px; border-radius: 50%; border: 1px solid #555; }
.red { background: radial-gradient(circle at 50% 20%, #ffe3e0 5%, #ee4b4b 45%, #b3211f 75%, #ff9a90); border-color: #8c3431; }
.amber { background: radial-gradient(circle at 50% 20%, #fff3dc 5%, #f5b04a 45%, #c67d1b 75%, #ffe08a); border-color: #93672b; }
.lime { background: radial-gradient(circle at 50% 20%, #efffe5 5%, #8ac768 45%, #4d9637 75%, #c7f08e); border-color: #4c7a3b; }
.title { font: 14px "DejaVu Sans", sans-serif; color: #2b2b2b; }

.toolbar {
  display: flex;
  align-items: center;
  height: 40px;
  padding-left: 8px;
  background: linear-gradient(#ececec, #c9c9c9);
  border-top: 1px solid #f8f8f8;
  border-bottom: 1px solid #a6a6a6;
}
.toolbar + .toolbar { height: 39px; }
.toolbar.last { height: 40px; border-bottom: 2px solid #929292; }
.grip {
  flex: none;
  width: 6px;
  height: 25px;
  background:
    radial-gradient(circle at 2px 2px, #f6f6f6 1px, #c2c2c2 1px, transparent 2px) 0 0 / 6px 6px,
    radial-gradient(circle at 4px 4px, #f6f6f6 1px, #c2c2c2 1px, transparent 2px) 0 1px / 6px 6px;
}
.grip.wide { width: 39px; height: 6px; }
.group { display: flex; align-items: center; justify-content: space-between; flex: none; margin: 0 15px 0 5px; }
.six { width: 234px; }
.eleven { width: 442px; margin-right: 14px; }
.ten { width: 400px; margin-right: 14px; }
.seven { width: 276px; margin-right: 14px; }
.sixteen { width: 650px; }
.toolbar .select-group { flex: 1; justify-content: flex-start; gap: 22px; margin-right: 9px; }
.select-group .more { margin-left: auto; }
.toolbar .help-group { width: 49px; margin-right: 1px; }
.tool { position: relative; flex: none; width: 26px; height: 26px; }
.tool svg { flex: none; width: 26px; height: 26px; overflow: visible; }
.dim svg, svg.dim { opacity: .5; }
.pressed::before {
  content: "";
  position: absolute;
  inset: -6px -5px;
  background: linear-gradient(90deg, #8d8d8d, #a9a9a9 20%, #a9a9a9 80%, #8d8d8d);
}
.pressed svg { position: relative; }
.menu { display: flex; align-items: center; gap: 3px; width: 33px; }
.drop { margin-top: 14px; border: 4px solid transparent; border-top: 8px solid #5b5b5b; border-bottom: 0; }
.drop.small { position: absolute; right: -1px; bottom: 1px; border-width: 4px 4px 0; border-top-color: #666; }
.more { flex: none; width: 12px; height: 10px; }
.more svg { width: 12px; height: 10px; }
.more.down { transform: rotate(90deg); }

.tag-text { font: bold 9px "DejaVu Sans", sans-serif; fill: #333; }
.one-text { font: bold 11px "Liberation Sans", sans-serif; fill: #444; }
.info-text { font: italic bold 17px "Liberation Serif", serif; fill: #fff; }
.help-text { font: 16px "Liberation Serif", serif; fill: #fff; }

.workspace { display: flex; flex: 1; }
.sidebar {
  display: flex;
  flex-direction: column;
  align-items: center;
  flex: none;
  width: 53px;
  padding: 6px 0 1px;
  background: linear-gradient(90deg, #eaeaea, #c4c4c4);
  border-right: 1px solid #a0a0a0;
}
.sidebar .grip:last-child { margin-top: auto; }
.side-tools { display: flex; flex-direction: column; justify-content: space-between; height: 359px; margin: 6px 0 27px; }

.panel { display: flex; flex-direction: column; flex: none; width: 442px; padding-left: 1px; background: #fff; }
.panel-head {
  display: flex;
  align-items: center;
  gap: 6px;
  height: 29px;
  margin-left: -1px;
  padding: 0 2px 2px;
  background: linear-gradient(#eee, #c6c6c6);
  border-bottom: 1px solid #8f8f8f;
}
.round, .round svg { width: 16px; height: 16px; }
.panel-title { flex: 1; font-size: 12px; text-align: center; }
.tree { line-height: 20px; }
.layer { display: flex; align-items: center; height: 21px; padding-left: 6px; font-weight: bold; }
.fold { border: 5px solid transparent; border-top: 9px solid #7b7b7b; border-bottom: 0; }
.check {
  appearance: none;
  position: relative;
  flex: none;
  width: 16px;
  height: 16px;
  margin: 0;
  border: 1px solid #a2a2a2;
  border-radius: 4px;
  background: linear-gradient(#fff, #ededed);
}
.layer .check { margin: 0 14px 0 13px; }
.check:checked { border-color: #4d6f9f; background: linear-gradient(#dcebfa, #86bbf0 60%, #c8efff); }
.check:checked::after {
  content: "";
  position: absolute;
  left: 5px;
  top: -5px;
  width: 7px;
  height: 15px;
  border: solid #111;
  border-width: 0 2px 2px 0;
  transform: rotate(35deg);
}
.kind { width: 18px; height: 16px; margin-right: 6px; }
.current { text-decoration: underline; }
.mark { display: flex; align-items: center; height: 21px; padding-left: 49px; }
.line { width: 18px; height: 1px; background: #555; }
.dot { width: 7px; height: 7px; margin-left: 5px; border: 1px solid #222; border-radius: 50%; }
.pink { background: #e15fb0; }
.teal { background: #3b8573; }
.sky { background: #74b4e3; }
.range { display: flex; align-items: center; gap: 6px; height: 20px; padding-left: 49px; }
.swatch { width: 18px; height: 18px; border: 1px solid #777; }
.pale { background: #bedeff; border-color: #c8e2fe; }
.hot { background: #f00; border-color: #f55; }
.c1 { background: #f7fbff; border-color: #999; }
.c2 { background: #c8dcf0; border-color: #8f9dac; }
.c3 { background: #73b2d8; border-color: #527f9a; }
.c4 { background: #2879b9; border-color: #1d5684; }
.c5 { background: #08306b; border-color: #06224c; }

.map { flex: 1; min-width: 0; border-left: 2px solid #929292; background: #fff; }
.map svg { width: 100%; }

.status {
  display: flex;
  align-items: center;
  height: 36px;
  padding: 0 0 2px 147px;
  border-top: 1px solid #a8a8a8;
  background: #ececec;
}
.square { flex: none; width: 22px; height: 22px; border: 1px solid #8c8c8c; background: #f2f2f2; }
.square svg { width: 20px; height: 20px; }
.coord-label { margin: 0 11px 0 10px; }
.coord {
  flex: 1;
  min-width: 0;
  height: 22px;
  border: 2px solid #b2b2b2;
  border-top-color: #8f8f8f;
  background: #fff;
  font: inherit;
  text-align: center;
}
.scale-label { margin: 0 14px 0 11px; }
.scale {
  appearance: none;
  width: 103px;
  height: 17px;
  margin: 2px 7px 0 0;
  padding: 0 4px;
  border: 1px solid #9d9d9d;
  border-radius: 0 4px 4px 0;
  background:
    linear-gradient(#aaa, #aaa) right 17px center / 1px 100% no-repeat,
    linear-gradient(to bottom right, #333 50%, transparent 0) right 5px center / 3px 4px no-repeat,
    linear-gradient(to bottom left, #333 50%, transparent 0) right 8px center / 3px 4px no-repeat,
    #fff;
  font: inherit;
  line-height: 15px;
}
.status .check { margin: 0 5px 0 7px; }
.epsg { margin: 0 11px 0 6px; color: #444; }
.resize { align-self: flex-end; flex: none; width: 12px; height: 12px; margin: 0 0 -2px 16px; }
```
